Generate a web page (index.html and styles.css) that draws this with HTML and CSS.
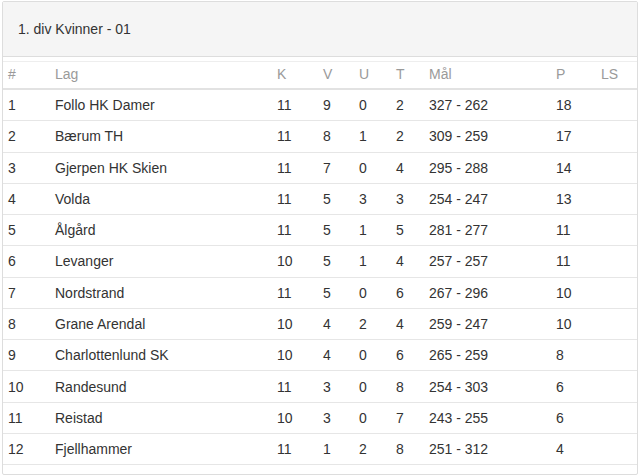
FILE: index.html
```html
<!DOCTYPE html>
<html lang="no">
<head>
<meta charset="utf-8">
<title>1. div Kvinner - 01</title>
<link rel="stylesheet" href="styles.css">
</head>
<body>
<div class="panel">
  <div class="panel-heading">1. div Kvinner - 01</div>
  <div class="table">
    <div class="row head">
      <div>#</div><div>Lag</div><div>K</div><div>V</div><div>U</div><div>T</div><div>Mål</div><div>P</div><div>LS</div>
    </div>
    <div class="row"><div>1</div><div>Follo HK Damer</div><div>11</div><div>9</div><div>0</div><div>2</div><div>327 - 262</div><div>18</div><div></div></div>
    <div class="row"><div>2</div><div>Bærum TH</div><div>11</div><div>8</div><div>1</div><div>2</div><div>309 - 259</div><div>17</div><div></div></div>
    <div class="row"><div>3</div><div>Gjerpen HK Skien</div><div>11</div><div>7</div><div>0</div><div>4</div><div>295 - 288</div><div>14</div><div></div></div>
    <div class="row"><div>4</div><div>Volda</div><div>11</div><div>5</div><div>3</div><div>3</div><div>254 - 247</div><div>13</div><div></div></div>
    <div class="row"><div>5</div><div>Ålgård</div><div>11</div><div>5</div><div>1</div><div>5</div><div>281 - 277</div><div>11</div><div></div></div>
    <div class="row"><div>6</div><div>Levanger</div><div>10</div><div>5</div><div>1</div><div>4</div><div>257 - 257</div><div>11</div><div></div></div>
    <div class="row"><div>7</div><div>Nordstrand</div><div>11</div><div>5</div><div>0</div><div>6</div><div>267 - 296</div><div>10</div><div></div></div>
    <div class="row"><div>8</div><div>Grane Arendal</div><div>10</div><div>4</div><div>2</div><div>4</div><div>259 - 247</div><div>10</div><div></div></div>
    <div class="row"><div>9</div><div>Charlottenlund SK</div><div>10</div><div>4</div><div>0</div><div>6</div><div>265 - 259</div><div>8</div><div></div></div>
    <div class="row"><div>10</div><div>Randesund</div><div>11</div><div>3</div><div>0</div><div>8</div><div>254 - 303</div><div>6</div><div></div></div>
    <div class="row"><div>11</div><div>Reistad</div><div>10</div><div>3</div><div>0</div><div>7</div><div>243 - 255</div><div>6</div><div></div></div>
    <div class="row"><div>12</div><div>Fjellhammer</div><div>11</div><div>1</div><div>2</div><div>8</div><div>251 - 312</div><div>4</div><div></div></div>
  </div>
</div>
</body>
</html>
```
FILE: styles.css
```css
html, body {
  margin: 0;
  padding: 0;
  background: #ffffff;
}
body {
  font-family: "Liberation Sans", Arial, sans-serif;
  font-size: 14px;
  color: #333333;
}
.panel {
  margin: 1px 2px 1px 2px;
  border: 1px solid #dddddd;
  border-radius: 2px;
  height: 474px;
  box-sizing: border-box;
  background: #ffffff;
}
.panel-heading {
  height: 55px;
  box-sizing: border-box;
  background: #f5f5f5;
  border-bottom: 1px solid #dddddd;
  padding-left: 15px;
  display: flex;
  align-items: center;
  color: #333333;
}
.table {
  margin-top: 4px;
  border-top: 1px solid #eeeeee;
}
.row {
  display: grid;
  grid-template-columns: 47px 222px 46px 36px 37px 33px 127px 45px 1fr;
  height: 31.27px;
  box-sizing: border-box;
  border-bottom: 1px solid #e6e6e6;
  align-items: center;
}
.row > div {
  padding-left: 5px;
  white-space: nowrap;
}
.row.head {
  height: 28px;
  padding-bottom: 3px;
  color: #9a9a9a;
  border-bottom: 2px solid #e2e2e2;
}
```
